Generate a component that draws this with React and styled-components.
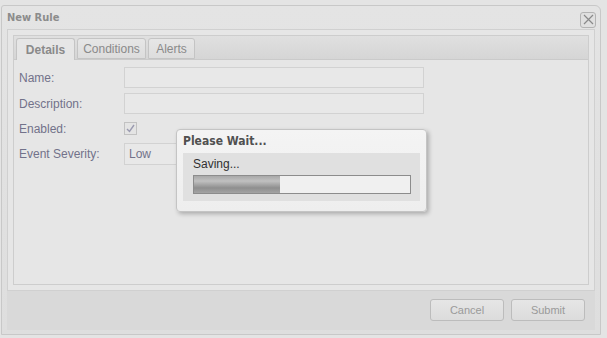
import React from "react"
import styled, { createGlobalStyle } from "styled-components"

const GlobalStyle = createGlobalStyle`
  html, body {
    margin: 0;
    padding: 0;
    background: #e4e4e4;
    font-family: "Liberation Sans", Arial, sans-serif;
  }
  * {
    box-sizing: border-box;
  }
`

const App = () => {
  return (
    <>
      <GlobalStyle />
      <Page>
        <Window>
          <Header>
            <Title>New Rule</Title>
            <CloseButton>
              <svg width="11" height="11" viewBox="0 0 11 11">
                <path d="M1 1 L10 10 M10 1 L1 10" stroke="#8a8a8a" strokeWidth="1.2" fill="none" />
              </svg>
            </CloseButton>
          </Header>
          <Body>
            <TabPanel>
              <TabStrip>
                <Tab active w={59}>Details</Tab>
                <Tab w={69}>Conditions</Tab>
                <Tab w={47}>Alerts</Tab>
              </TabStrip>
              <Form>
                <Label>Name:</Label>
                <Input />
                <Label>Description:</Label>
                <Input />
                <Label>Enabled:</Label>
                <CheckCell>
                  <Checkbox>
                    <svg width="9" height="9" viewBox="0 0 9 9">
                      <path d="M1 5 L3.5 7.5 L8 1" stroke="#9a9ab0" strokeWidth="1.4" fill="none" />
                    </svg>
                  </Checkbox>
                </CheckCell>
                <Label>Event Severity:</Label>
                <Select>Low</Select>
              </Form>
            </TabPanel>
          </Body>
          <Footer>
            <Button>Cancel</Button>
            <Button>Submit</Button>
          </Footer>
        </Window>

        <WaitDialog>
          <WaitTitle>Please Wait...</WaitTitle>
          <WaitBody>
            <WaitText>Saving...</WaitText>
            <Progress>
              <ProgressFill style={{ width: "40%" }} />
            </Progress>
          </WaitBody>
        </WaitDialog>
      </Page>
    </>
  )
}

export default App

const Page = styled.div`
  position: relative;
  width: 607px;
  height: 338px;
  padding: 5px 0 0 1px;
  overflow: hidden;
`

// Window
const Window = styled.div`
  display: flex;
  flex-direction: column;
  width: 600px;
  height: 330px;
  border: 1px solid #c8c8c8;
  border-radius: 3px 6px 0 0;
  background: linear-gradient(#e4e4e4, #dedede);
`

const Header = styled.div`
  display: flex;
  align-items: center;
  justify-content: space-between;
  height: 23px;
  padding: 0 4px 0 5px;
`

const Title = styled.div`
  font-family: Tahoma, "DejaVu Sans Condensed", "Liberation Sans", sans-serif;
  font-size: 11px;
  font-weight: bold;
  color: #8c8c8c;
`

const CloseButton = styled.div`
  display: flex;
  align-items: center;
  justify-content: center;
  width: 16px;
  height: 16px;
  margin-top: 4px;
  border: 1px solid #b4b4b4;
  border-radius: 3px;
  background: #e0e0e0;
`

const Body = styled.div`
  flex: 1;
  margin: 0 5px;
  padding: 5px;
  border: 1px solid #d0d0d0;
  background: #e6e6e6;
  display: flex;
`

const TabPanel = styled.div`
  flex: 1;
  display: flex;
  flex-direction: column;
  border: 1px solid #cdcdcd;
  background: #e6e6e6;
`

const TabStrip = styled.div`
  display: flex;
  align-items: flex-end;
  gap: 2px;
  height: 24px;
  padding-left: 2px;
  background: linear-gradient(#e0e0e0, #d5d5d5);
  border-bottom: 1px solid #cacaca;
`

const Tab = styled.div`
  width: ${p => p.w}px;
  height: ${p => (p.active ? "22px" : "21px")};
  margin-bottom: ${p => (p.active ? "-1px" : "0")};
  display: flex;
  align-items: center;
  justify-content: center;
  border: 1px solid #c4c4c4;
  border-bottom: ${p => (p.active ? "none" : "1px solid #c4c4c4")};
  border-radius: 3px 3px 0 0;
  background: ${p => (p.active ? "#e6e6e6" : "linear-gradient(#e6e6e6, #dddddd)")};
  font-size: 12px;
  font-weight: ${p => (p.active ? "bold" : "normal")};
  color: #8a8a8a;
`

const Form = styled.div`
  display: grid;
  grid-template-columns: 105px 300px;
  grid-template-rows: 21px 21px 19px 22px;
  row-gap: 5px;
  align-items: center;
  padding: 7px 5px;
`

const Label = styled.div`
  font-size: 12px;
  color: #72728a;
`

const Input = styled.div`
  height: 21px;
  border: 1px solid #d2d2d2;
  background: #e8e8e8;
`

const CheckCell = styled.div`
  display: flex;
  align-items: center;
`

const Checkbox = styled.div`
  width: 13px;
  height: 13px;
  border: 1px solid #c2c2c2;
  background: #e4e4e4;
  display: flex;
  align-items: center;
  justify-content: center;
`

const Select = styled.div`
  width: 200px;
  height: 22px;
  padding-left: 4px;
  display: flex;
  align-items: center;
  border: 1px solid #d2d2d2;
  background: #e8e8e8;
  font-size: 12px;
  color: #72728a;
`

const Footer = styled.div`
  display: flex;
  justify-content: flex-end;
  gap: 7px;
  height: 39px;
  margin: 0 5px 4px;
  padding: 8px 10px 0 0;
  background: #d9d9d9;
`

const Button = styled.div`
  width: 74px;
  height: 22px;
  display: flex;
  align-items: center;
  justify-content: center;
  border: 1px solid #bcbcbc;
  border-radius: 3px;
  background: linear-gradient(#e6e6e6, #dcdcdc);
  font-size: 11px;
  color: #9a9a9a;
`

// Wait dialog overlay
const WaitDialog = styled.div`
  position: absolute;
  left: 176px;
  top: 129px;
  width: 251px;
  height: 83px;
  padding: 0 6px;
  border: 1px solid #c4c4c4;
  border-radius: 4px;
  background: linear-gradient(#f4f4f4, #eeeeee);
  box-shadow: 2px 2px 4px rgba(0, 0, 0, 0.25);
`

const WaitTitle = styled.div`
  height: 23px;
  padding-top: 4px;
  font-family: Tahoma, "DejaVu Sans Condensed", "Liberation Sans", sans-serif;
  font-size: 12px;
  font-weight: bold;
  color: #505050;
`

const WaitBody = styled.div`
  height: 48px;
  padding: 4px 10px 0;
  background: #e0e0e0;
`

const WaitText = styled.div`
  height: 18px;
  font-size: 12px;
  color: #303030;
`

const Progress = styled.div`
  width: 218px;
  height: 19px;
  border: 1px solid #8c8c8c;
  background: #f0f0f0;
`

const ProgressFill = styled.div`
  height: 100%;
  background: linear-gradient(#a8a8a8, #c0c0c0 30%, #8e8e8e 70%, #a4a4a4);
`
